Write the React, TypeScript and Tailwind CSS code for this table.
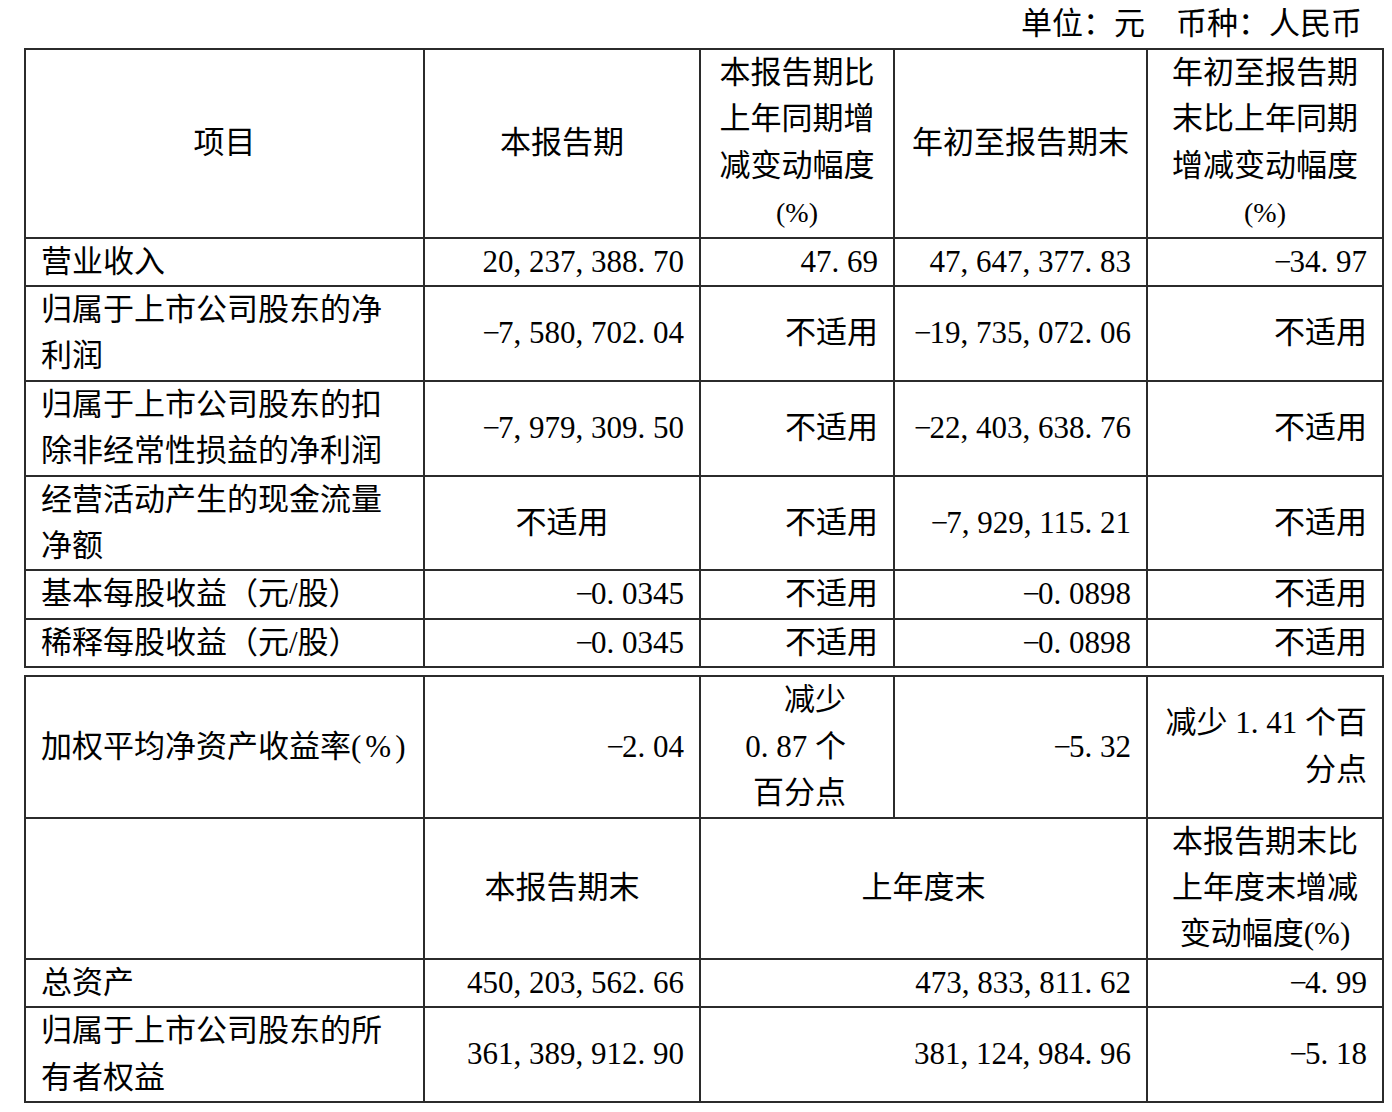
import React from "react";

const B = "border-2 border-[#2b2b2b] px-[15px] py-0 align-middle";

function N({ v }: { v: string }) {
  return (
    <>
      {v.split("").map((c, i) =>
        c === "," || c === "." ? (
          <span key={i} className="inline-block w-[0.5em] text-left">
            {c}
          </span>
        ) : c === "-" ? (
          <span key={i} className="inline-block w-[0.5em] text-center">
            −
          </span>
        ) : (
          <React.Fragment key={i}>{c}</React.Fragment>
        )
      )}
    </>
  );
}

function Cols() {
  return (
    <colgroup>
      <col className="w-[399px]" />
      <col className="w-[276px]" />
      <col className="w-[194px]" />
      <col className="w-[253px]" />
      <col className="w-[236px]" />
    </colgroup>
  );
}

const NA = "不适用";

export default function App() {
  const rows: { label: React.ReactNode; a: React.ReactNode; b: React.ReactNode; c: React.ReactNode; d: React.ReactNode; aCenter?: boolean }[] = [
    { label: "营业收入", a: <N v="20,237,388.70" />, b: <N v="47.69" />, c: <N v="47,647,377.83" />, d: <N v="-34.97" /> },
    {
      label: (
        <>
          归属于上市公司股东的净
          <br />
          利润
        </>
      ),
      a: <N v="-7,580,702.04" />,
      b: NA,
      c: <N v="-19,735,072.06" />,
      d: NA,
    },
    {
      label: (
        <>
          归属于上市公司股东的扣
          <br />
          除非经常性损益的净利润
        </>
      ),
      a: <N v="-7,979,309.50" />,
      b: NA,
      c: <N v="-22,403,638.76" />,
      d: NA,
    },
    {
      label: (
        <>
          经营活动产生的现金流量
          <br />
          净额
        </>
      ),
      a: NA,
      aCenter: true,
      b: NA,
      c: <N v="-7,929,115.21" />,
      d: NA,
    },
    { label: "基本每股收益（元/股）", a: <N v="-0.0345" />, b: NA, c: <N v="-0.0898" />, d: NA },
    { label: "稀释每股收益（元/股）", a: <N v="-0.0345" />, b: NA, c: <N v="-0.0898" />, d: NA },
  ];

  return (
    <div className="w-[1392px] h-[1112px] bg-white text-black text-[31px] leading-[46.4px] font-['Liberation_Serif','Noto_Sans_CJK_SC',serif]">
      <div className="h-[48px] leading-[48px] text-right pr-[30px]">单位：元　币种：人民币</div>
      <div className="ml-[24px]">
        <table className="table-fixed border-collapse w-[1358px]">
          <Cols />
          <tbody>
            <tr>
              <td className={`${B} text-center`}>项目</td>
              <td className={`${B} text-center`}>本报告期</td>
              <td className={`${B} text-center`}>
                本报告期比
                <br />
                上年同期增
                <br />
                减变动幅度
                <br />
                <span className="text-[28px]">(%)</span>
              </td>
              <td className={`${B} text-center whitespace-nowrap`}>年初至报告期末</td>
              <td className={`${B} text-center`}>
                年初至报告期
                <br />
                末比上年同期
                <br />
                增减变动幅度
                <br />
                <span className="text-[28px]">(%)</span>
              </td>
            </tr>
            {rows.map((r, i) => (
              <tr key={i}>
                <td className={`${B} text-left whitespace-nowrap`}>{r.label}</td>
                <td className={`${B} ${r.aCenter ? "text-center" : "text-right"} whitespace-nowrap`}>{r.a}</td>
                <td className={`${B} text-right whitespace-nowrap`}>{r.b}</td>
                <td className={`${B} text-right whitespace-nowrap`}>{r.c}</td>
                <td className={`${B} text-right whitespace-nowrap`}>{r.d}</td>
              </tr>
            ))}
          </tbody>
        </table>

        <table className="table-fixed border-collapse w-[1358px] mt-[7px]">
          <Cols />
          <tbody>
            <tr>
              <td className={`${B} text-left whitespace-nowrap`}>
                加权平均净资产收益率<span className="tracking-[4px]">(%)</span>
              </td>
              <td className={`${B} text-right whitespace-nowrap`}>
                <N v="-2.04" />
              </td>
              <td className={`${B} text-right whitespace-nowrap !pr-[47px]`}>
                减少
                <br />
                <N v="0.87" /> 个
                <br />
                百分点
              </td>
              <td className={`${B} text-right whitespace-nowrap`}>
                <N v="-5.32" />
              </td>
              <td className={`${B} text-right whitespace-nowrap`}>
                减少 <N v="1.41" /> 个百
                <br />
                分点
              </td>
            </tr>
            <tr>
              <td className={`${B}`}></td>
              <td className={`${B} text-center`}>本报告期末</td>
              <td className={`${B} text-center`} colSpan={2}>
                上年度末
              </td>
              <td className={`${B} text-center whitespace-nowrap`}>
                本报告期末比
                <br />
                上年度末增减
                <br />
                变动幅度(%)
              </td>
            </tr>
            <tr>
              <td className={`${B} text-left`}>总资产</td>
              <td className={`${B} text-right`}>
                <N v="450,203,562.66" />
              </td>
              <td className={`${B} text-right`} colSpan={2}>
                <N v="473,833,811.62" />
              </td>
              <td className={`${B} text-right`}>
                <N v="-4.99" />
              </td>
            </tr>
            <tr>
              <td className={`${B} text-left whitespace-nowrap`}>
                归属于上市公司股东的所
                <br />
                有者权益
              </td>
              <td className={`${B} text-right`}>
                <N v="361,389,912.90" />
              </td>
              <td className={`${B} text-right`} colSpan={2}>
                <N v="381,124,984.96" />
              </td>
              <td className={`${B} text-right`}>
                <N v="-5.18" />
              </td>
            </tr>
          </tbody>
        </table>
      </div>
    </div>
  );
}
